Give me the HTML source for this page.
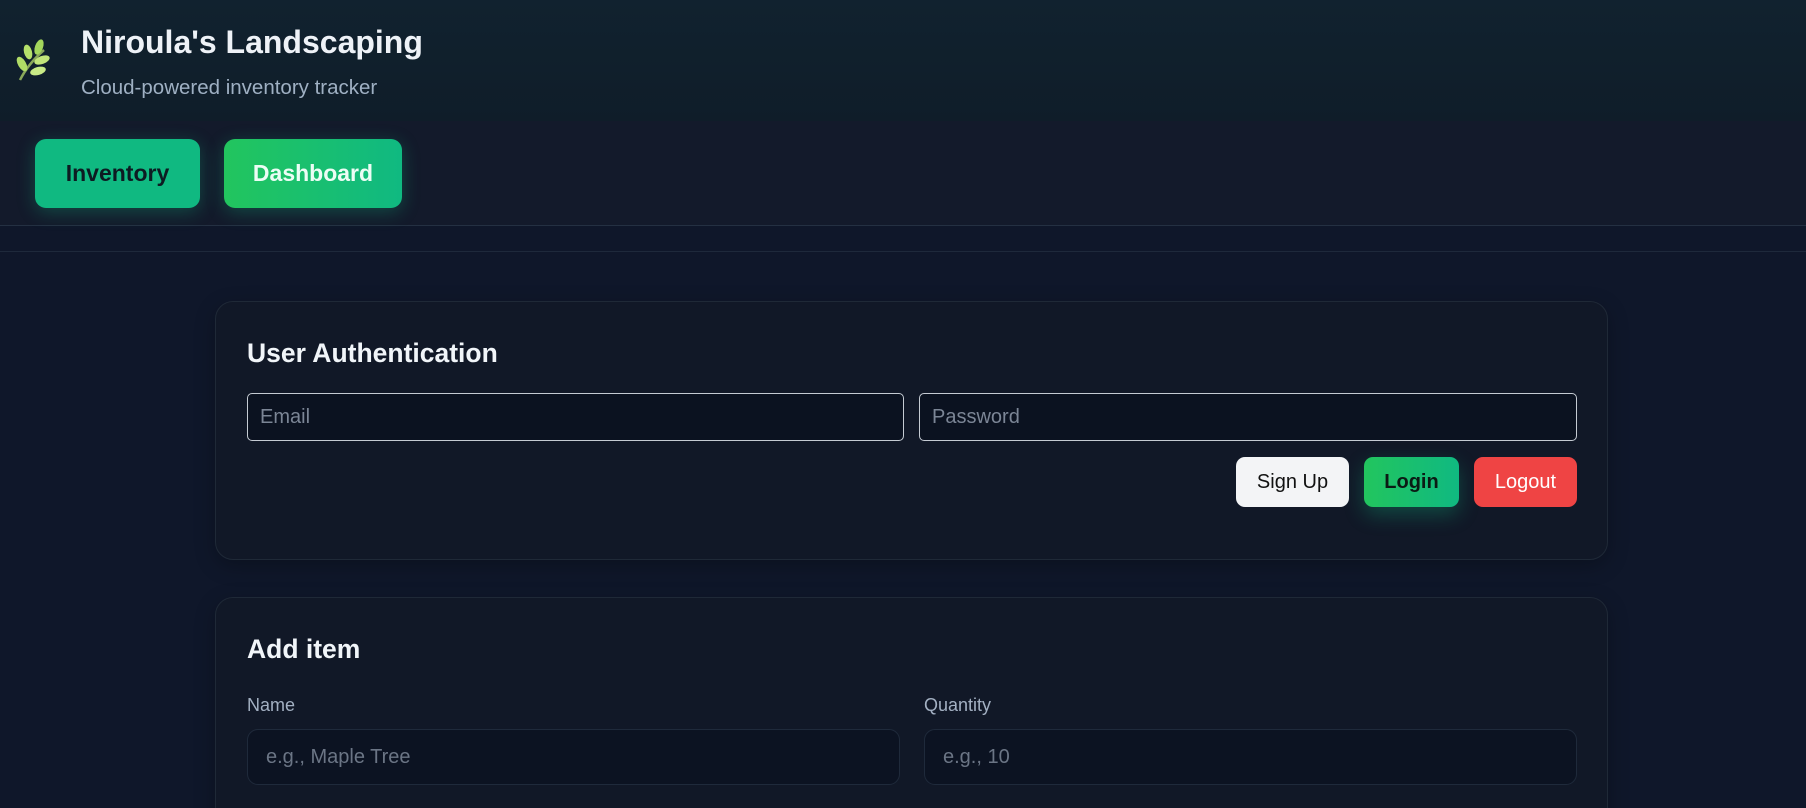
<!DOCTYPE html>
<html><head><meta charset="utf-8"><style>
*{box-sizing:border-box;margin:0;padding:0}
html,body{width:1806px;height:808px;overflow:hidden;background:#0f172a}
body{font-family:"Liberation Sans",sans-serif}
#w{position:relative;width:1806px;height:808px;overflow:hidden}
.hdr{position:absolute;left:0;top:0;width:1806px;height:121px;background:linear-gradient(180deg,#11222f,#0f1d29)}
.title{position:absolute;left:81px;top:24px;color:#eef2f7;font-size:32px;font-weight:bold}
.sub{position:absolute;left:81px;top:76px;color:#9fb0c3;font-size:20.5px}
.nav{position:absolute;left:0;top:121px;width:1806px;height:105px;background:#131a2b;border-bottom:1px solid #243042}
.line2{position:absolute;left:0;top:251px;width:1806px;height:1px;background:#1e293b}
.nb{position:absolute;top:139px;height:69px;border-radius:11px;font-size:23px;font-weight:bold;display:flex;align-items:center;justify-content:center;box-shadow:0 4px 18px rgba(16,185,129,0.3)}
.card{position:absolute;left:215px;width:1393px;background:#111827;border:1px solid #1f2937;border-radius:18px;box-shadow:0 6px 20px rgba(0,0,0,0.25)}
.h2{position:absolute;left:247px;color:#f1f5f9;font-size:26.5px;font-weight:bold}
.inp{position:absolute;background:#0b1220;border:1px solid #c5cbd3;border-radius:5px;color:#7b8595;font-size:20px;padding-left:12px;display:flex;align-items:center}
.inp2{position:absolute;background:#0c1322;border:1px solid #1f2a3b;border-radius:11px;color:#6b7585;font-size:20px;padding-left:18px;display:flex;align-items:center}
.btn{position:absolute;top:457px;height:50px;border-radius:9px;font-size:20px;display:flex;align-items:center;justify-content:center}
.lbl{position:absolute;top:695px;color:#a3b0c2;font-size:18px}
</style></head><body><div id="w">
<div class="hdr">
<svg style="position:absolute;left:14px;top:38px" width="38" height="44" viewBox="0 0 38 44">
<path d="M6 42 Q14 26 30 12" stroke="#8aa85a" stroke-width="2.5" fill="none"/>
<ellipse cx="25" cy="9" rx="4" ry="8" fill="#a3d65c" transform="rotate(20 25 9)"/>
<ellipse cx="14" cy="14" rx="4" ry="7.5" fill="#b5e06a" transform="rotate(-15 14 14)"/>
<ellipse cx="28" cy="22" rx="8" ry="4" fill="#c2e57a" transform="rotate(-20 28 22)"/>
<ellipse cx="8" cy="26" rx="4" ry="8" fill="#b0dc66" transform="rotate(-30 8 26)"/>
<ellipse cx="24" cy="33" rx="8" ry="4" fill="#c8ea86" transform="rotate(-15 24 33)"/>
</svg>
<div class="title">Niroula's Landscaping</div>
<div class="sub">Cloud-powered inventory tracker</div>
</div>
<div class="nav"></div>
<div class="line2"></div>
<div class="nb" style="left:35px;width:165px;background:#10b981;color:#0d1b22">Inventory</div>
<div class="nb" style="left:224px;width:178px;background:linear-gradient(90deg,#22c55e,#10b981);color:#ecfdf5">Dashboard</div>

<div class="card" style="top:301px;height:259px"></div>
<div class="h2" style="top:338px">User Authentication</div>
<div class="inp" style="left:247px;top:393px;width:657px;height:48px">Email</div>
<div class="inp" style="left:919px;top:393px;width:658px;height:48px">Password</div>
<div class="btn" style="left:1236px;width:113px;background:#f3f4f6;color:#111">Sign Up</div>
<div class="btn" style="left:1364px;width:95px;background:linear-gradient(90deg,#22c55e,#10b981);color:#0b1a14;font-weight:bold;box-shadow:0 8px 20px rgba(16,185,129,0.3)">Login</div>
<div class="btn" style="left:1474px;width:103px;background:#ef4444;color:#fff">Logout</div>

<div class="card" style="top:597px;height:240px"></div>
<div class="h2" style="top:634px">Add item</div>
<div class="lbl" style="left:247px">Name</div>
<div class="lbl" style="left:924px">Quantity</div>
<div class="inp2" style="left:247px;top:729px;width:653px;height:56px">e.g., Maple Tree</div>
<div class="inp2" style="left:924px;top:729px;width:653px;height:56px">e.g., 10</div>
</div></body></html>
